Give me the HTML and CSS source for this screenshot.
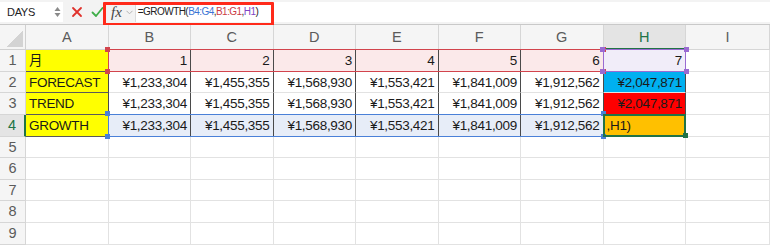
FILE: index.html
```html
<!DOCTYPE html>
<html lang="ja">
<head>
  <meta charset="UTF-8" />
  <title>GROWTH</title>
  <link rel="stylesheet" href="styles.css">
</head>
<body>
  <div class="toolbar">
    <div class="namebox">
      <span>DAYS</span>
      <svg class="spin" width="7" height="12" viewBox="0 0 7 12"><path d="M3.5 1 L6.5 5 L0.5 5 Z M3.5 11 L6.5 7 L0.5 7 Z" fill="#8a8a8a"/></svg>
    </div>
    <div class="tbtn first">
      <svg width="12" height="12" viewBox="0 0 12 12"><path d="M2 2 L10 10 M10 2 L2 10" stroke="#e0312b" stroke-width="1.8" stroke-linecap="round"/></svg>
    </div>
    <div class="tbtn">
      <svg width="13" height="12" viewBox="0 0 13 12"><path d="M1.5 6.5 L5 10 L11.5 2" stroke="#3fae49" stroke-width="1.8" fill="none" stroke-linecap="round" stroke-linejoin="round"/></svg>
    </div>
    <div class="fx">fx</div>
    <svg class="chev" width="7" height="5" viewBox="0 0 7 5"><path d="M0.5 0.8 L3.5 3.8 L6.5 0.8" stroke="#b5b5b5" fill="none"/></svg>
    <div class="formula">=GROWTH(<span class="ref-blue">B4:G4</span>,<span class="ref-red">B1:G1</span>,<span class="ref-purple">H1</span>)</div>
    <div class="mark"></div>
  </div>

  <div class="sheet" id="sheet"></div>

  <script>
    const cols = ["A", "B", "C", "D", "E", "F", "G", "H", "I"];
    const rows = [
      ["月", 1, 2, 3, 4, 5, 6, 7],
      ["FORECAST", "¥1,233,304", "¥1,455,355", "¥1,568,930", "¥1,553,421", "¥1,841,009", "¥1,912,562", "¥2,047,871"],
      ["TREND", "¥1,233,304", "¥1,455,355", "¥1,568,930", "¥1,553,421", "¥1,841,009", "¥1,912,562", "¥2,047,871"],
      ["GROWTH", "¥1,233,304", "¥1,455,355", "¥1,568,930", "¥1,553,421", "¥1,841,009", "¥1,912,562", ",H1)"]
    ];
    const sheet = document.getElementById("sheet");

    function cell(cls, text) {
      const d = document.createElement("div");
      d.className = cls;
      if (text !== undefined) d.textContent = text;
      sheet.appendChild(d);
      return d;
    }

    cell("corner");
    cols.forEach(c => cell("colhead" + (c === "H" ? " active" : ""), c));

    for (let r = 1; r <= 9; r++) {
      cell("rowhead" + (r === 4 ? " active" : ""), r);
      cols.forEach((c, i) => {
        let cls = "cell";
        let text = "";
        if (r <= 4 && i < 8) {
          cls += " data";
          text = rows[r - 1][i];
          if (i === 0) cls += " label";
          else cls += " num";
          if (r === 1 && i >= 1 && i <= 6) cls += " hl-red";
          if (r === 1 && i === 7) cls += " hl-purple";
          if (r === 4 && i >= 1 && i <= 6) cls += " hl-blue";
          if (r === 2 && i === 7) cls += " cyan";
          if (r === 3 && i === 7) cls += " red";
          if (r === 4 && i === 7) cls += " orange";
        }
        cell(cls, text);
      });
    }

    // range outlines drawn over the grid
    function range(cls, c1, r1, c2, r2) {
      const colW = 82.5, rowH = 21.65;
      const box = cell("range " + cls);
      box.style.left = (26 + c1 * colW - 1) + "px";
      box.style.top = (25 + (r1 - 1) * rowH - 1) + "px";
      box.style.width = ((c2 - c1 + 1) * colW + 1) + "px";
      box.style.height = ((r2 - r1 + 1) * rowH + 1) + "px";
      ["tl", "tr", "bl", "br"].forEach(p => {
        const h = document.createElement("span");
        h.className = "handle " + p;
        box.appendChild(h);
      });
    }
    range("r-red", 1, 1, 6, 1);
    range("r-purple", 7, 1, 7, 1);
    range("r-blue", 1, 4, 6, 4);
    range("r-green", 7, 4, 7, 4);
  </script>
</body>
</html>
```

FILE: styles.css
```css
body {
  margin: 0;
  font-family: "Liberation Sans", Arial, "Noto Sans CJK JP", sans-serif;
  background: #fff;
  width: 770px;
  height: 246px;
  overflow: hidden;
}

.toolbar {
  position: relative;
  height: 25px;
  box-sizing: border-box;
  display: flex;
  align-items: center;
  background: #f3f3f3;
  border-bottom: 1px solid #c9c9c9;
}

.namebox {
  width: 63px;
  height: 20px;
  box-sizing: border-box;
  background: #fff;
  display: flex;
  align-items: center;
  justify-content: space-between;
  padding: 0 2px 0 7px;
  font-size: 11px;
  letter-spacing: -0.3px;
  color: #222;
}

.tbtn {
  width: 21px;
  display: flex;
  justify-content: center;
}

.tbtn.first {
  margin-left: 3px;
}

.fx {
  margin-left: 3px;
  font-family: "Liberation Serif", serif;
  font-style: italic;
  font-size: 15px;
  color: #444;
}

.chev {
  margin-left: 4px;
}

.formula {
  flex: 1;
  height: 20px;
  margin-left: 2px;
  background: #fff;
  border-left: 1px solid #dcdcdc;
  padding-left: 2px;
  font-size: 10px;
  letter-spacing: -0.55px;
  line-height: 20px;
  color: #222;
}

.ref-blue { color: #3c74d4; }
.ref-red { color: #cc3a44; }
.ref-purple { color: #7f45c4; }

.mark {
  position: absolute;
  left: 103px;
  top: 2px;
  width: 171px;
  height: 24px;
  box-sizing: border-box;
  border: 3px solid #ff2a1a;
  border-radius: 1px;
}

.sheet {
  position: relative;
  display: grid;
  grid-template-columns: 26px repeat(8, 82.5px) 1fr;
  grid-template-rows: 25px repeat(9, 21.65px);
}

.sheet > div {
  box-sizing: border-box;
  border-right: 1px solid #e2e2e2;
  border-bottom: 1px solid #e2e2e2;
  overflow: hidden;
  white-space: nowrap;
}

.corner {
  background: #f5f5f5 linear-gradient(135deg, transparent 50%, #d3d3d3 50%) no-repeat;
  background-size: 16px 16px;
  background-position: 7px 6px;
  border-color: #d0d0d0 !important;
}

.colhead {
  background: #f5f5f5;
  border-color: #d6d6d6 !important;
  text-align: center;
  font-size: 14.5px;
  line-height: 25px;
  color: #5b5b5b;
}

.colhead.active {
  background: #e4e4e4;
  color: #217346;
  border-bottom: 2px solid #217346 !important;
}

.rowhead {
  background: #f5f5f5;
  border-color: #d6d6d6 !important;
  text-align: center;
  font-size: 14.5px;
  line-height: 21px;
  color: #5b5b5b;
}

.rowhead.active {
  background: #e4e4e4;
  color: #217346;
  border-right: 2px solid #217346 !important;
}

.cell {
  font-size: 13.5px;
  letter-spacing: -0.3px;
  line-height: 21px;
  color: #1a1a1a;
  padding: 0 3px;
}

.cell.data {
  border-right-color: #4a4a4a;
}

.cell.num {
  text-align: right;
}

.cell.label {
  background: #ffff00;
  border-bottom-color: #5a5a5a;
}

.hl-red { background: #fbe9ea; }
.hl-purple { background: #f1edf9; }
.hl-blue { background: #e7edf8; }
.cyan { background: #00b0f0; }
.red { background: #ff0000; }
.cell.orange { background: #ffc000; text-align: left; }

.sheet > .range {
  position: absolute;
  box-sizing: border-box;
  border: 1.5px solid;
  overflow: visible;
  pointer-events: none;
}

.r-red { border-color: #d2444d !important; }
.r-purple { border-color: #9a6bd2 !important; }
.r-blue { border-color: #4a80d8 !important; }
.r-green { border: 2px solid #217346 !important; }

.handle {
  position: absolute;
  width: 5px;
  height: 5px;
}

.r-red .handle { background: #d2444d; }
.r-purple .handle { background: #9a6bd2; }
.r-blue .handle { background: #4a80d8; }
.r-green .handle { background: #217346; display: none; }
.r-green .handle.br { display: block; }

.tl { left: -3.5px; top: -3.5px; }
.tr { right: -3.5px; top: -3.5px; }
.bl { left: -3.5px; bottom: -3.5px; }
.br { right: -3.5px; bottom: -3.5px; }
```
